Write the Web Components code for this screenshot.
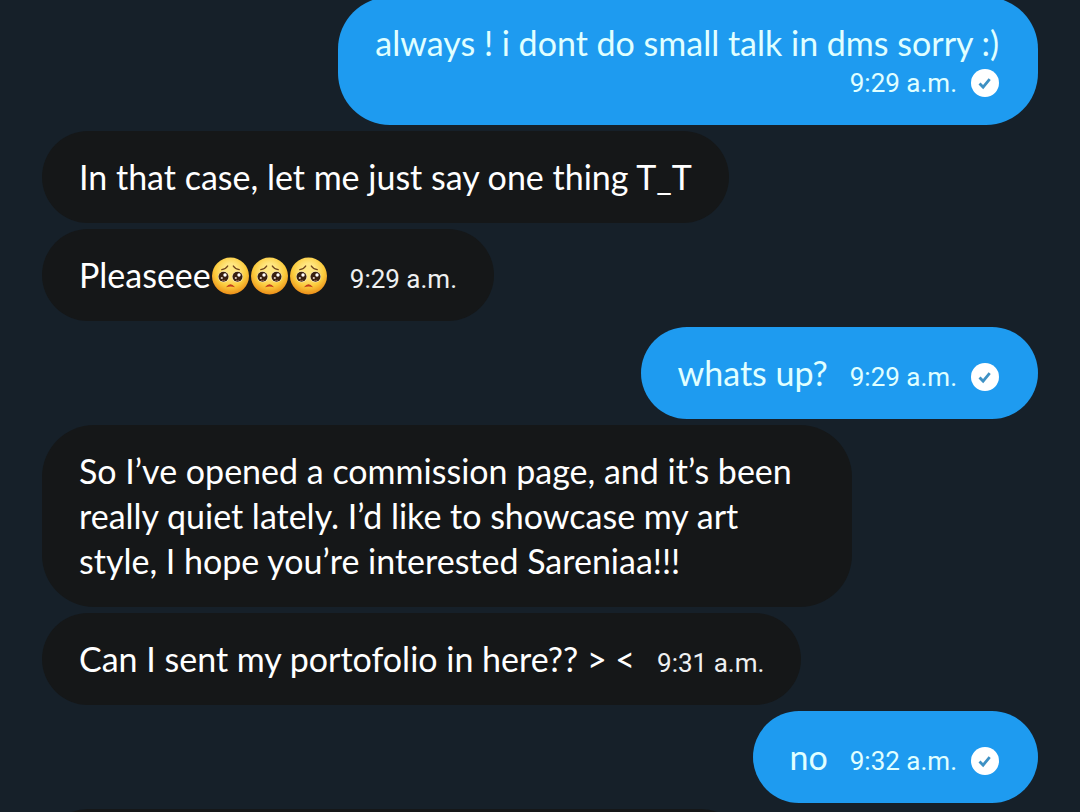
<!DOCTYPE html>
<html lang="en">
<head>
<meta charset="utf-8">
<meta name="viewport" content="width=device-width, initial-scale=1">
<title>Messages</title>
<style>
  body { margin: 0; background: #162029; }
</style>
</head>
<body>
<chat-thread>
  <chat-message side="sent" stacked>always ! i dont do small talk in dms sorry :)<message-time slot="meta" read>9:29 a.m.</message-time></chat-message>
  <chat-message>In that case, let me just say one thing T_T</chat-message>
  <chat-message>Pleaseee<pleading-face></pleading-face><pleading-face></pleading-face><pleading-face></pleading-face><message-time slot="meta">9:29 a.m.</message-time></chat-message>
  <chat-message side="sent">whats up?<message-time slot="meta" read>9:29 a.m.</message-time></chat-message>
  <chat-message long>So I’ve opened a commission page, and it’s been<br>really quiet lately. I’d like to showcase my art<br>style, I hope you’re interested Sareniaa!!!</chat-message>
  <chat-message>Can I sent my portofolio in here?? &gt; &lt;<message-time slot="meta">9:31 a.m.</message-time></chat-message>
  <chat-message side="sent">no<message-time slot="meta" read>9:32 a.m.</message-time></chat-message>
  <chat-message upcoming></chat-message>
</chat-thread>

<script>
class ChatThread extends HTMLElement {
  constructor() {
    super();
    this.attachShadow({ mode: "open" }).innerHTML = `
      <style>
        :host { display: block; height: 100vh; overflow: hidden; color: #fff;
                font-family: Lato, "Liberation Sans", sans-serif; }
        main { display: flex; flex-direction: column; gap: 6px; margin-top: -3px; padding: 0 42px; }
      </style>
      <main><slot></slot></main>`;
  }
}

class ChatMessage extends HTMLElement {
  constructor() {
    super();
    this.attachShadow({ mode: "open" }).innerHTML = `
      <style>
        :host { display: flex; flex: none; justify-content: flex-start; }
        .bubble { box-sizing: border-box; display: flex; align-items: flex-end; column-gap: 22px;
                  max-width: 82%; min-height: 92px; padding: 23px 37px 24px; border-radius: 52px;
                  background: #151718; font-size: 34px; line-height: 45px; }
        .text { white-space: nowrap; }
        :host([side="sent"]) { justify-content: flex-end; }
        :host([side="sent"]) .bubble { align-items: baseline; background: #1e9bf0; color: #e0ffff; padding-right: 39px; }
        :host([stacked]) .bubble { flex-direction: column; align-items: stretch !important; }
        :host([long]) .bubble { width: 810px; }
        :host([upcoming]) .bubble { width: 705px; }
      </style>
      <div class="bubble"><div class="text"><slot></slot></div><slot name="meta"></slot></div>`;
  }
}

class MessageTime extends HTMLElement {
  constructor() {
    super();
    this.attachShadow({ mode: "open" }).innerHTML = `
      <style>
        :host { display: flex; align-items: center; justify-content: flex-end; gap: 14px;
                font-family: Roboto, "Liberation Sans", sans-serif;
                font-size: 26px; line-height: 36px; white-space: nowrap; color: #eef0f1; }
        :host([read]) { color: #e0ffff; }
        svg { display: none; width: 28px; height: 28px; }
        :host([read]) svg { display: block; }
      </style>
      <span><slot></slot></span>
      <svg viewBox="0 0 28 28" role="img" aria-label="Seen">
        <circle cx="14" cy="14" r="14" fill="#fff"/>
        <path d="M8.500 14.500l3.600 3.600 6.600-8" fill="none" stroke="#3e91c4" stroke-width="2.800"/>
      </svg>`;
  }
}

class PleadingFace extends HTMLElement {
  constructor() {
    super();
    this.attachShadow({ mode: "open" }).innerHTML = `
      <style>
        :host { display: inline-block; width: 39px; height: 38px; vertical-align: -7px; }
        svg { display: block; width: 39px; height: 38px; }
      </style>
      <svg viewBox="0 0 39 38" role="img" aria-label="Pleading face">
        <defs>
          <radialGradient id="skin" cx=".5" cy=".36" r=".65">
            <stop offset=".3" stop-color="#ffe680"/>
            <stop offset=".65" stop-color="#fbcb3c"/>
            <stop offset="1" stop-color="#ea8a17"/>
          </radialGradient>
        </defs>
        <circle cx="19.500" cy="19" r="18.500" fill="url(#skin)"/>
        <path d="M10.800 12.600q4-.5 5.900-3.600M28.200 12.600q-4-.5-5.900-3.600" fill="none" stroke="#70431c" stroke-width="1.400" stroke-linecap="round"/>
        <circle cx="12.500" cy="19.800" r="5.500" fill="#fff3d0"/>
        <circle cx="26.500" cy="19.800" r="5.500" fill="#fff3d0"/>
        <circle cx="12.500" cy="19.800" r="5" fill="#38200f"/>
        <circle cx="26.500" cy="19.800" r="5" fill="#38200f"/>
        <circle cx="14" cy="18" r="1.700" fill="#fff"/>
        <circle cx="28" cy="18" r="1.700" fill="#fff"/>
        <circle cx="10.800" cy="21" r="1.100" fill="#e5d5cb"/>
        <circle cx="24.800" cy="21" r="1.100" fill="#e5d5cb"/>
        <path d="M11 23.200q1.600.8 3.200 0M25 23.200q1.600.8 3.200 0" fill="none" stroke="#93624a" stroke-width="1"/>
        <path d="M15 30.300q4.500-6 9 0q-4.500-1.600-9 0z" fill="#c33d1c"/>
      </svg>`;
  }
}

customElements.define("chat-thread", ChatThread);
customElements.define("chat-message", ChatMessage);
customElements.define("message-time", MessageTime);
customElements.define("pleading-face", PleadingFace);
</script>
</body>
</html>
